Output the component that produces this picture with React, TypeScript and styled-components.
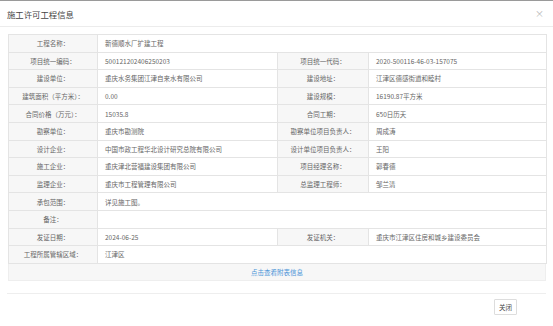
import styled, { createGlobalStyle } from "styled-components";

const GlobalStyle = createGlobalStyle`
  html, body {
    margin: 0;
    padding: 0;
    background: #fff;
  }
  body {
    font-family: "Noto Sans CJK SC", "Liberation Sans", sans-serif;
    color: #666;
  }
`;

const Modal = styled.div`
  width: 553px;
  height: 326px;
  box-sizing: border-box;
  border-top: 1px solid #9a9a9a;
  display: flex;
  flex-direction: column;
`;

const Header = styled.div`
  height: 25px;
  display: flex;
  align-items: center;
  justify-content: space-between;
  padding: 0 9px 0 7px;
  border-bottom: 1px solid #ececec;
`;

const Title = styled.h4`
  margin: 0;
  font-size: 8.4px;
  font-weight: normal;
  color: #444;
`;

const Close = styled.span`
  font-size: 9px;
  color: #b5b5b5;
  line-height: 1;
`;

const Body = styled.div`
  padding: 7px 7px 12px 8px;
`;

const Table = styled.table`
  width: 538px;
  border-collapse: collapse;
  table-layout: fixed;
  font-size: 6.5px;
`;

const Row = styled.tr`
  height: 17.6px;
`;

const Label = styled.td`
  background: #f7f7f7;
  border: 1px solid #e4e4e4;
  text-align: center;
  color: #666;
  padding: 0;
  white-space: nowrap;
`;

const Value = styled.td`
  border: 1px solid #e4e4e4;
  padding: 0 7px;
  color: #666;
  white-space: nowrap;
`;

const LinkRow = styled.div`
  width: 538px;
  height: 17.6px;
  box-sizing: border-box;
  background: #f7f7f7;
  border: 1px solid #eee;
  border-top: none;
  display: flex;
  align-items: center;
  justify-content: center;
  font-size: 6.5px;
  color: #4a94d8;
`;

const Footer = styled.div`
  margin: 0 7px;
  border-top: 1px solid #eeeeee;
  display: flex;
  justify-content: flex-end;
  padding: 5px 29px 0 0;
`;

const Button = styled.button`
  width: 23px;
  height: 16px;
  padding: 0;
  background: #fff;
  border: 1px solid #ddd;
  border-radius: 1px;
  font-family: inherit;
  font-size: 6.5px;
  color: #444;
`;

type Pair = [string, string];

const rows: (Pair | [Pair, Pair])[] = [
  ["工程名称：", "新德顺水厂扩建工程"],
  [
    ["项目统一编码：", "500121202406250203"],
    ["项目统一代码：", "2020-500116-46-03-157075"],
  ],
  [
    ["建设单位：", "重庆水务集团江津自来水有限公司"],
    ["建设地址：", "江津区德感街道和睦村"],
  ],
  [
    ["建筑面积（平方米）：", "0.00"],
    ["建设规模：", "16190.87平方米"],
  ],
  [
    ["合同价格（万元）：", "15035.8"],
    ["合同工期：", "650日历天"],
  ],
  [
    ["勘察单位：", "重庆市勘测院"],
    ["勘察单位项目负责人：", "周成涛"],
  ],
  [
    ["设计企业：", "中国市政工程华北设计研究总院有限公司"],
    ["设计单位项目负责人：", "王阳"],
  ],
  [
    ["施工企业：", "重庆津北营福建设集团有限公司"],
    ["项目经理名称：", "郭春德"],
  ],
  [
    ["监理企业：", "重庆市工程管理有限公司"],
    ["总监理工程师：", "邹兰清"],
  ],
  ["承包范围：", "详见施工图。"],
  ["备注：", ""],
  [
    ["发证日期：", "2024-06-25"],
    ["发证机关：", "重庆市江津区住房和城乡建设委员会"],
  ],
  ["工程所属管辖区域：", "江津区"],
];

const App = () => {
  return (
    <>
      <GlobalStyle />
      <Modal>
        <Header>
          <Title>施工许可工程信息</Title>
          <Close>×</Close>
        </Header>
        <Body>
          <Table>
            <colgroup>
              <col style={{ width: 89 }} />
              <col style={{ width: 180 }} />
              <col style={{ width: 91 }} />
              <col style={{ width: 178 }} />
            </colgroup>
            <tbody>
              {rows.map((r, i) =>
                Array.isArray(r[0]) ? (
                  <Row key={i}>
                    <Label>{(r as [Pair, Pair])[0][0]}</Label>
                    <Value>{(r as [Pair, Pair])[0][1]}</Value>
                    <Label>{(r as [Pair, Pair])[1][0]}</Label>
                    <Value>{(r as [Pair, Pair])[1][1]}</Value>
                  </Row>
                ) : (
                  <Row key={i}>
                    <Label>{(r as Pair)[0]}</Label>
                    <Value colSpan={3}>{(r as Pair)[1]}</Value>
                  </Row>
                )
              )}
            </tbody>
          </Table>
          <LinkRow>点击查看附表信息</LinkRow>
        </Body>
        <Footer>
          <Button>关闭</Button>
        </Footer>
      </Modal>
    </>
  );
};

export default App;
